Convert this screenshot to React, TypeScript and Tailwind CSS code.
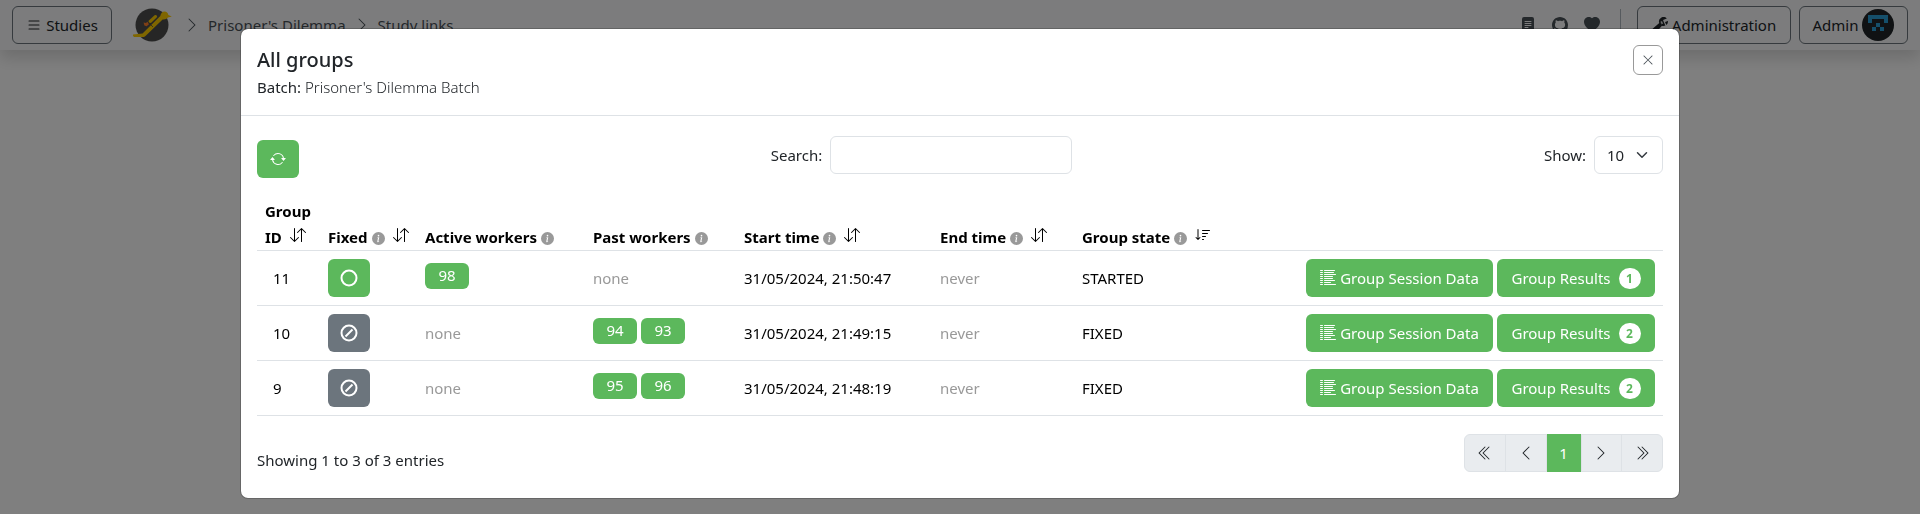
import type { ReactNode } from "react";
import {
  BsArrowDownUp,
  BsArrowRepeat,
  BsChevronDoubleLeft,
  BsChevronDoubleRight,
  BsChevronLeft,
  BsChevronRight,
  BsFileTextFill,
  BsGithub,
  BsHeartFill,
  BsInfoCircleFill,
  BsList,
  BsListColumnsReverse,
  BsSortDown,
  BsWrenchAdjustable,
  BsXLg,
} from "react-icons/bs";

type Group = {
  id: number;
  fixed: boolean;
  active: number[];
  past: number[];
  start: string;
  state: string;
  results: number;
};

const groups: Group[] = [
  { id: 11, fixed: false, active: [98], past: [], start: "31/05/2024, 21:50:47", state: "STARTED", results: 1 },
  { id: 10, fixed: true, active: [], past: [94, 93], start: "31/05/2024, 21:49:15", state: "FIXED", results: 2 },
  { id: 9, fixed: true, active: [], past: [95, 96], start: "31/05/2024, 21:48:19", state: "FIXED", results: 2 },
];

const columns = [
  { label: "Group ID", width: "w-[63px]", info: false, sort: "both" },
  { label: "Fixed", width: "w-[97px]", info: true, sort: "both" },
  { label: "Active workers", width: "w-[168px]", info: true, sort: "" },
  { label: "Past workers", width: "w-[151px]", info: true, sort: "" },
  { label: "Start time", width: "w-[196px]", info: true, sort: "both" },
  { label: "End time", width: "w-[142px]", info: true, sort: "both" },
  { label: "Group state", width: "w-[200px]", info: true, sort: "down" },
];

function Logo() {
  return (
    <svg viewBox="0 0 40 36" className="h-9 w-10">
      <circle cx="20" cy="18" r="16.5" fill="#4d4d4d" />
      <path
        fill="#ffcc00"
        d="M1 27.6 L10.5 26.6 L28.3 9 Q29 4.6 32.6 4.4 Q35.6 4.6 36.4 8 L39.8 9.6 L36 10.6 Q34 12.8 30.6 12.4 L13.5 29 L12 30 L2 30 Q0.4 29 1 27.6Z"
      />
      <path d="M16.6 13.8 L22.6 8.2 Q25 7.4 25.2 10 L19.2 15.8 Q16 16.4 16.6 13.8Z" fill="#ffcc00" />
      <path d="M11.6 15.6 L14 16 L15.4 14.8 L17 17.2 L14.6 19.2 L12.4 18.6Z" fill="#ff7f2a" />
      <path d="M16.5 15.5 L21 20" stroke="#4d4d4d" strokeWidth="0.8" />
    </svg>
  );
}

function Avatar() {
  return (
    <svg viewBox="0 0 32 32" className="size-8">
      <circle cx="16" cy="16" r="16" fill="#212529" />
      <path
        fill="#2a9fd6"
        d="M6 6h20v8h-4v-4H10v4H6zM14 14h4v4h4v4h-4v-4h-4v4h-4v-4h4z"
      />
    </svg>
  );
}

function Navbar() {
  return (
    <nav className="flex h-[50px] items-center bg-[#f8f9fa] px-3 shadow-[0_8px_16px_rgba(0,0,0,0.15)]">
      <button className="flex h-[38px] w-[100px] items-center justify-center gap-1 rounded-md border border-[#6c757d] text-[#212529]">
        <BsList className="size-4" />
        Studies
      </button>
      <a href="#" aria-label="Home" className="ml-5">
        <Logo />
      </a>
      <ol className="ml-3 flex items-center gap-2 text-[#495057]">
        <li className="flex items-center gap-2">
          <BsChevronRight className="size-4" />
          <a href="#">Prisoner's Dilemma</a>
        </li>
        <li className="flex items-center gap-2">
          <BsChevronRight className="size-4" />
          <a href="#">Study links</a>
        </li>
      </ol>
      <div className="ml-auto flex items-center gap-4 text-[#495057]">
        <a href="#" aria-label="Documentation"><BsFileTextFill className="size-4" /></a>
        <a href="#" aria-label="GitHub"><BsGithub className="size-4" /></a>
        <a href="#" aria-label="Sponsor"><BsHeartFill className="size-4" /></a>
      </div>
      <div className="mr-4 ml-5 h-8 w-px bg-[#adb5bd]" />
      <div className="flex gap-2 text-[#212529]">
        <button className="flex h-[38px] w-[154px] items-center justify-center gap-1 rounded-md border border-[#6c757d]">
          <BsWrenchAdjustable className="size-4" />
          Administration
        </button>
        <button className="flex h-[38px] w-[109px] items-center justify-center gap-1 rounded-md border border-[#6c757d]">
          Admin
          <Avatar />
        </button>
      </div>
    </nav>
  );
}

function Badges({ ids }: { ids: number[] }) {
  if (ids.length === 0) {
    return <span className="leading-[30px] text-[#999999]">none</span>;
  }
  return (
    <div className="flex gap-1">
      {ids.map((id) => (
        <a key={id} href="#" className="h-[26px] w-11 rounded-md bg-[#5cb85c] text-center leading-6 text-white">
          {id}
        </a>
      ))}
    </div>
  );
}

function GroupRow({ group }: { group: Group }) {
  return (
    <tr className="border-b border-[#dee2e6]">
      <td className="py-2 pl-4">{group.id}</td>
      <td className="p-2">
        <button
          aria-label={group.fixed ? "Unfix group" : "Fix group"}
          className={`flex h-[38px] w-[42px] items-center justify-center rounded-md text-white ${
            group.fixed ? "bg-[#6c757d]" : "bg-[#5cb85c]"
          }`}
        >
          <svg viewBox="0 0 18 18" className="size-[18px]" fill="none" stroke="currentColor" strokeWidth="2">
            <circle cx="9" cy="9" r="7.5" />
            {group.fixed && <path d="M5.5 12.5 L12.5 5.5" />}
          </svg>
        </button>
      </td>
      <td className="px-2 pt-3 align-top"><Badges ids={group.active} /></td>
      <td className="px-2 pt-3 align-top"><Badges ids={group.past} /></td>
      <td className="px-2">{group.start}</td>
      <td className="px-2 text-[#999999]">never</td>
      <td className="px-2">{group.state}</td>
      <td className="p-2">
        <div className="flex justify-end gap-1 text-white">
          <button className="flex h-[38px] w-[187px] items-center justify-center gap-1 rounded-md bg-[#5cb85c]">
            <BsListColumnsReverse className="size-4" />
            Group Session Data
          </button>
          <button className="flex h-[38px] w-[158px] items-center justify-center gap-2 rounded-md bg-[#5cb85c]">
            Group Results
            <span className="h-[21px] w-[22px] rounded-full bg-white text-center text-xs leading-[21px] font-bold text-[#5cb85c]">
              {group.results}
            </span>
          </button>
        </div>
      </td>
    </tr>
  );
}

function PageButton({ label, active, children }: { label: string; active?: boolean; children: ReactNode }) {
  return (
    <button
      aria-label={label}
      className={`flex items-center justify-center ${
        active ? "-my-px w-[35px] bg-[#5cb85c] text-white" : "flex-1 text-[#212529]"
      }`}
    >
      {children}
    </button>
  );
}

function GroupsModal() {
  return (
    <div className="fixed inset-0 overflow-auto bg-black/50">
      <div
        role="dialog"
        aria-labelledby="modal-title"
        className="mx-auto mt-7 w-3/4 rounded-lg border border-black/20 bg-white bg-clip-padding"
      >
        <header className="flex items-start justify-between border-b border-[#dee2e6] p-4">
          <div>
            <h5 id="modal-title" className="text-xl leading-[30px] font-medium">All groups</h5>
            <p className="leading-6">
              Batch: <span className="font-light">Prisoner's Dilemma Batch</span>
            </p>
          </div>
          <button
            aria-label="Close"
            className="flex size-[30px] items-center justify-center rounded-md border border-[#999999] text-[#495057]"
          >
            <BsXLg className="size-3" />
          </button>
        </header>

        <div className="px-4 pt-5 pb-[26px]">
          <div className="flex items-start justify-between">
            <button
              aria-label="Refresh"
              className="mt-1 flex h-[38px] w-[42px] items-center justify-center rounded-md bg-[#5cb85c] text-white"
            >
              <BsArrowRepeat className="size-4" />
            </button>
            <label className="flex items-center gap-2">
              Search:
              <input type="search" className="h-[38px] w-[242px] rounded-md border border-[#dee2e6] px-3" />
            </label>
            <label className="flex items-center gap-2">
              Show:
              <span className="relative flex">
                <select className="h-[38px] w-[69px] appearance-none rounded-md border border-[#dee2e6] bg-white pl-3">
                  <option>10</option>
                  <option>25</option>
                  <option>50</option>
                </select>
                <svg
                  viewBox="0 0 16 16"
                  className="pointer-events-none absolute top-[13px] right-[15px] size-3"
                  fill="none"
                  stroke="#343a40"
                  strokeWidth="2"
                  strokeLinecap="round"
                  strokeLinejoin="round"
                >
                  <path d="m2 5 6 6 6-6" />
                </svg>
              </span>
            </label>
          </div>

          <table className="mt-5 w-full table-fixed text-left text-black">
            <thead>
              <tr className="border-b border-[#dee2e6]">
                {columns.map((col) => (
                  <th key={col.label} className={`${col.width} px-2 align-bottom leading-[26px] font-bold`}>
                    {col.label}
                    {col.info && <BsInfoCircleFill className="ml-1 inline size-[13px] text-[#999999]" />}
                    {col.sort === "both" && <BsArrowDownUp className="ml-2 inline size-4 align-baseline" />}
                    {col.sort === "down" && <BsSortDown className="ml-2 inline size-4 align-baseline" />}
                  </th>
                ))}
                <th />
              </tr>
            </thead>
            <tbody>
              {groups.map((group) => (
                <GroupRow key={group.id} group={group} />
              ))}
            </tbody>
          </table>

          <div className="mt-[18px] flex items-end justify-between">
            <p>Showing 1 to 3 of 3 entries</p>
            <div className="flex h-[38px] w-[199px] divide-x divide-[#dee2e6] rounded-md border border-[#dee2e6] bg-[#e9ecef]">
              <PageButton label="First"><BsChevronDoubleLeft className="size-4" /></PageButton>
              <PageButton label="Previous"><BsChevronLeft className="size-4" /></PageButton>
              <PageButton label="Page 1" active>1</PageButton>
              <PageButton label="Next"><BsChevronRight className="size-4" /></PageButton>
              <PageButton label="Last"><BsChevronDoubleRight className="size-4" /></PageButton>
            </div>
          </div>
        </div>
      </div>
    </div>
  );
}

export default function App() {
  return (
    <div className="min-h-screen bg-white font-['Noto_Sans',sans-serif] text-[15px] leading-6 text-[#212529]">
      <Navbar />
      <GroupsModal />
    </div>
  );
}
